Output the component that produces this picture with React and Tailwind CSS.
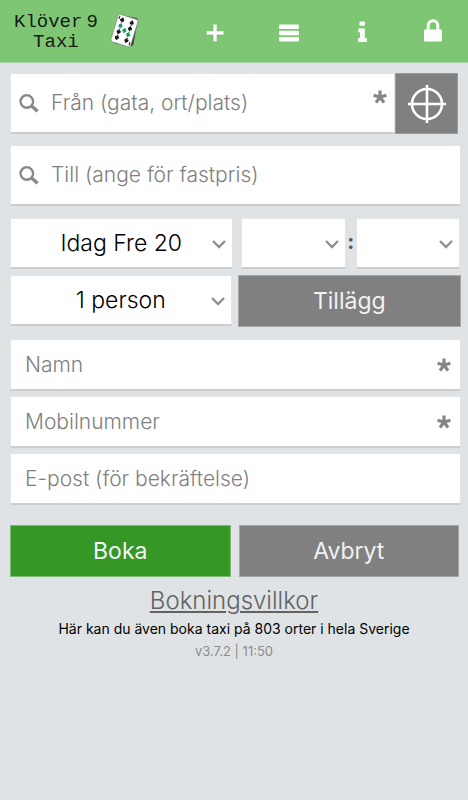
import React from "react";

function Header() {
  return (
    <header className="flex h-[63px] items-center border-b border-[#a9d6a0] bg-[#7fc674] pr-[17px] pl-3.5">
      <div className="flex flex-1 items-center gap-2.5">
        <div className="flex flex-col items-center pt-0.5 font-['Liberation_Mono',monospace] text-[19px] leading-5 text-[#151a14]">
          <span className="flex gap-1">
            <span>Klöver</span>
            <span>9</span>
          </span>
          <span>Taxi</span>
        </div>
        <CardLogo />
      </div>
      <nav className="flex items-center gap-9" aria-label="Meny">
        <button type="button" aria-label="Ny bokning" className="flex h-10 w-9 items-center justify-center text-white">
          <svg width="18" height="18" viewBox="0 0 18 18" className="mt-1">
            <path d="M0 9.5h17M8.5 1v17" stroke="#4c8a43" strokeOpacity=".55" strokeWidth="3.4" />
            <path d="M0.5 9h17M9 0.5v17" stroke="currentColor" strokeWidth="3.4" />
          </svg>
        </button>
        <button type="button" aria-label="Meny" className="flex h-10 w-10 items-center justify-center text-white">
          <svg width="20" height="18" viewBox="0 0 20 18" className="mt-1">
            <rect y="0.5" width="20" height="4.4" rx="1" fill="currentColor" />
            <rect y="6.8" width="20" height="4.4" rx="1" fill="currentColor" />
            <rect y="13" width="20" height="4.4" rx="1" fill="currentColor" />
          </svg>
        </button>
        <button type="button" aria-label="Information" className="flex h-10 w-[34px] items-center justify-center text-white">
          <svg width="9" height="22" viewBox="0 0 9 22" fill="currentColor" className="mt-px">
            <rect x="1.4" y="0.6" width="5.6" height="4.2" rx="1.2" />
            <path d="M0.8 7.4h6v9.6h1.6q.5 0 .5.5v3q0 .5-.5.5H.6q-.5 0-.5-.5v-3q0-.5.5-.5h1.4v-5.800H.8q-.5 0-.5-.5v-2.800q0-.5.5-.5z" />
          </svg>
        </button>
        <button type="button" aria-label="Logga in" className="flex h-10 w-9 items-center justify-center text-white">
          <svg width="18" height="23" viewBox="0 0 18 23" className="-mt-0.5">
            <path d="M4.200 11V6.500a4.800 4.800 0 0 1 9.600 0V11" fill="none" stroke="currentColor" strokeWidth="3" />
            <rect y="10.500" width="18" height="12" rx="1" fill="currentColor" />
          </svg>
        </button>
      </nav>
    </header>
  );
}

function Spade({ x, y, green, flip }) {
  return (
    <g transform={`translate(${x} ${y}) scale(1 ${flip ? -1 : 1})`} fill={green ? "#129b62" : "#151515"}>
      <path d="M0-2.600C.8-1.300 2-.7 2 .5 2 1.500.9 1.700.3 1.100L.9 2.600H-.9L-.3 1.100C-.9 1.700-2 1.500-2 .5-2-.7-.8-1.300 0-2.600z" />
    </g>
  );
}

function CardLogo() {
  return (
    <svg width="32" height="36" viewBox="0 0 30 34" aria-hidden="true">
      <g transform="translate(1 0) rotate(17 14 17)">
        <rect x="7" y="2.800" width="18" height="27" rx="2" fill="#3f473e" transform="rotate(-7 14 17)" />
        <rect x="4.500" y="3" width="19.500" height="27" rx="2" fill="#ffffff" stroke="#777" strokeWidth=".5" />
        <Spade x={9.4} y={7.500} />
        <Spade x={18.800} y={7.500} />
        <Spade x={9.4} y={13.200} green />
        <Spade x={18.800} y={13.200} />
        <Spade x={14.200} y={16.400} green />
        <Spade x={9.4} y={19.300} flip />
        <Spade x={18.800} y={19.300} green flip />
        <Spade x={9.4} y={25} flip />
        <Spade x={18.800} y={25} flip />
        <path d="M6.200 4.500v3M22.500 25.500v3" stroke="#222" strokeWidth="1" />
      </g>
    </svg>
  );
}

function SearchIcon() {
  return (
    <svg width="20" height="19" viewBox="0 0 20 19" fill="none" stroke="#8a8a8a" className="shrink-0" aria-hidden="true">
      <circle cx="7.800" cy="7.500" r="6.300" strokeWidth="2.400" />
      <path d="M12.300 11.700l6.300 5.600" strokeWidth="3.400" />
    </svg>
  );
}

function Star() {
  return (
    <svg width="14" height="14" viewBox="0 0 14 14" stroke="#858585" strokeWidth="3.200" className="shrink-0" aria-hidden="true">
      <path d="M7 7V.5M7 7L.6 5.200M7 7l6.400-1.800M7 7l-4 5.600M7 7l4 5.600" />
    </svg>
  );
}

const box = "border border-[#e3e4e5] border-b-2 border-b-[#cbcdce] bg-white";
const field = "min-w-0 flex-1 bg-transparent text-[21px] font-light text-black outline-none placeholder:text-[#808080] placeholder:opacity-100";

function SearchField({ label, children }) {
  return (
    <div className={`flex h-[61px] min-w-0 flex-1 items-center gap-3 pr-[7px] pl-2 ${box}`}>
      <SearchIcon />
      <input type="text" aria-label={label} placeholder={label} className={field} />
      {children}
    </div>
  );
}

function TextField({ label, type, required }) {
  return (
    <div className={`flex h-[52px] items-center pr-[9px] pl-3.5 ${box}`}>
      <input type={type} aria-label={label} placeholder={label} required={required} className={field} />
      {required && <Star />}
    </div>
  );
}

function Select({ label, options, className }) {
  return (
    <div className={`relative min-w-0 ${className}`}>
      <select aria-label={label} className={`block h-[51px] w-full appearance-none px-4 text-center text-[23px] font-light text-black outline-none ${box}`}>
        {options.map((o) => (
          <option key={o}>{o}</option>
        ))}
      </select>
      <svg width="14" height="9" viewBox="0 0 14 9" fill="none" stroke="#8f8f8f" strokeWidth="2.400" className="pointer-events-none absolute top-[22px] right-[7px]" aria-hidden="true">
        <path d="M1 1l6 6 6-6" />
      </svg>
    </div>
  );
}

export default function App() {
  return (
    <div className="min-h-screen bg-[#dfe3e6] font-[Inter,sans-serif] text-black">
      <Header />
      <form className="pt-2.5 pr-[7px] pl-[10px]" onSubmit={(e) => e.preventDefault()}>
        <div className="flex pr-[3px]">
          <SearchField label="Från (gata, ort/plats)">
            <span className="mb-3">
              <Star />
            </span>
          </SearchField>
          <button type="button" aria-label="Hämta min position" className="flex h-[61px] w-[63px] items-center justify-center border border-[#999b9c] bg-[#808080]">
            <svg width="40" height="40" viewBox="0 0 40 40" fill="none" stroke="#ffffff" strokeWidth="2.600">
              <circle cx="20" cy="20" r="15" />
              <path d="M20 1v38M1 20h38" />
            </svg>
          </button>
        </div>

        <div className="mt-[11px] flex">
          <SearchField label="Till (ange för fastpris)" />
        </div>

        <div className="mt-3 flex items-center pr-px">
          <Select label="Datum" options={["Idag Fre 20"]} className="flex-[222]" />
          <Select label="Timme" options={[""]} className="ml-2 flex-[105]" />
          <span className="w-2.5 pb-1 text-center text-[21px] font-bold text-[#555]">:</span>
          <Select label="Minut" options={[""]} className="flex-[104]" />
        </div>

        <div className="mt-1.5 flex gap-1.5">
          <Select label="Antal personer" options={["1 person"]} className="flex-1" />
          <button type="button" className="h-[52px] flex-1 border border-[#a3a5a6] bg-[#808080] text-[23px] text-[#f1f1f1]">
            Tillägg
          </button>
        </div>

        <div className="mt-3 flex flex-col gap-[5px]">
          <TextField label="Namn" type="text" required />
          <TextField label="Mobilnummer" type="tel" required />
          <TextField label="E-post (för bekräftelse)" type="email" />
        </div>

        <div className="mt-5 flex gap-2 pr-0.5">
          <button type="submit" className="h-[52px] flex-1 border border-[#7dba75] bg-[#349726] text-[23px] text-[#f4f4f4]">
            Boka
          </button>
          <button type="button" className="h-[52px] flex-1 border border-[#a3a5a6] bg-[#808080] text-[23px] text-[#f1f1f1]">
            Avbryt
          </button>
        </div>
      </form>

      <footer className="mt-2.5 text-center">
        <a href="#villkor" className="inline-block text-2xl leading-7 font-light text-[#626262] underline decoration-2 underline-offset-2">
          Bokningsvillkor
        </a>
        <p className="text-sm leading-7">Här kan du även boka taxi på 803 orter i hela Sverige</p>
        <p className="text-[13px] leading-4 text-[#8d8d8d]">v3.7.2 | 11:50</p>
      </footer>
    </div>
  );
}
